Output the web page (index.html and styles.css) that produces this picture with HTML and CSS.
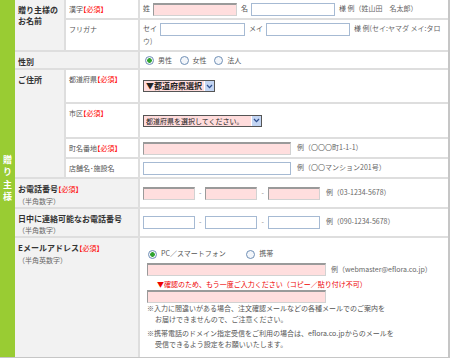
FILE: index.html
```html
<!DOCTYPE html>
<html lang="ja">
<head>
    <meta charset="UTF-8">
    <title>贈り主様情報</title>
    <link rel="stylesheet" href="styles.css">
</head>
<body>
    <table class="entry">
        <colgroup>
            <col class="col-side">
            <col class="col-label">
            <col class="col-sub">
            <col class="col-field">
        </colgroup>
        <tr class="h20">
            <th class="side" rowspan="10">贈<br>り<br>主<br>様</th>
            <th class="label" rowspan="2">贈り主様の<br>お名前</th>
            <td class="sub">漢字<span class="req">【必須】</span></td>
            <td class="field name">姓<input type="text" class="txt need w84">名<input type="text" class="txt w84">様 <span class="ex">例（姓山田　名太郎）</span></td>
        </tr>
        <tr class="h32">
            <td class="sub">フリガナ</td>
            <td class="field name top">セイ<input type="text" class="txt w85">メイ<input type="text" class="txt w84">様 <span class="ex">例(セイ:ヤマダ メイ:タロウ)</span></td>
        </tr>
        <tr class="h18">
            <th class="label" colspan="2">性別</th>
            <td class="field">
                <label class="opt"><input type="radio" name="sex" checked>男性</label>
                <label class="opt"><input type="radio" name="sex">女性</label>
                <label class="opt"><input type="radio" name="sex">法人</label>
            </td>
        </tr>
        <tr class="h34">
            <th class="label" rowspan="4">ご住所</th>
            <td class="sub">都道府県<span class="req">【必須】</span></td>
            <td class="field">
                <span class="pick pick-pref"><select><option>▼都道府県選択</option></select><span class="pick-btn"><svg width="7" height="5" viewBox="0 0 7 5"><path d="M1 1 L3.5 3.6 L6 1" fill="none" stroke="#2f4f8f" stroke-width="1.3"/></svg></span></span>
            </td>
        </tr>
        <tr class="h35">
            <td class="sub">市区<span class="req">【必須】</span></td>
            <td class="field">
                <span class="pick pick-city"><select><option>都道府県を選択してください。</option></select><span class="pick-btn"><svg width="7" height="5" viewBox="0 0 7 5"><path d="M1 1 L3.5 3.6 L6 1" fill="none" stroke="#2f4f8f" stroke-width="1.3"/></svg></span></span>
            </td>
        </tr>
        <tr class="h20">
            <td class="sub">町名番地<span class="req">【必須】</span></td>
            <td class="field"><input type="text" class="txt need w148"><span class="ex">例（〇〇〇町1-1-1）</span></td>
        </tr>
        <tr class="h20">
            <td class="sub">店舗名･施設名</td>
            <td class="field"><input type="text" class="txt w148"><span class="ex">例（〇〇マンション201号）</span></td>
        </tr>
        <tr class="h30">
            <th class="label" colspan="2">お電話番号<span class="req">【必須】</span><br><span class="hint">（半角数字）</span></th>
            <td class="field"><input type="text" class="txt need w52"><span class="dash">-</span><input type="text" class="txt need w52"><span class="dash">-</span><input type="text" class="txt need w52"><span class="ex">例（03-1234-5678）</span></td>
        </tr>
        <tr class="h28">
            <th class="label" colspan="2">日中に連絡可能なお電話番号<br><span class="hint">（半角数字）</span></th>
            <td class="field"><input type="text" class="txt w52"><span class="dash">-</span><input type="text" class="txt w52"><span class="dash">-</span><input type="text" class="txt w52"><span class="ex">例（090-1234-5678）</span></td>
        </tr>
        <tr class="h119 last">
            <th class="label" colspan="2">Eメールアドレス<span class="req">【必須】</span><br><span class="hint">（半角英数字）</span></th>
            <td class="field mail">
                <div class="radios">
                    <label class="opt"><input type="radio" name="mailtype" checked>PC／スマートフォン</label>
                    <label class="opt wide"><input type="radio" name="mailtype">携帯</label>
                </div>
                <div class="mail-line"><input type="text" class="txt need w179"><span class="ex">例（webmaster@eflora.co.jp）</span></div>
                <p class="confirm">▼確認のため、もう一度ご入力ください（コピー／貼り付け不可）</p>
                <div class="mail-line again"><input type="text" class="txt need w179"></div>
                <p class="note">※入力に間違いがある場合、注文確認メールなどの各種メールでのご案内を<br>お届けできませんので、ご注意ください。</p>
                <p class="note">※携帯電話のドメイン指定受信をご利用の場合は、eflora.co.jpからのメールを<br>受信できるよう設定をお願いいたします。</p>
            </td>
        </tr>
    </table>
</body>
</html>
```

FILE: styles.css
```css
body {
    margin: 0;
    font-family: "Noto Sans CJK JP", "Noto Sans", sans-serif;
    font-size: 7px;
    color: #555;
    background: #fff;
}
p {
    margin: 0;
}

.entry {
    width: 450px;
    table-layout: fixed;
    border-collapse: separate;
    border-spacing: 0;
    border-right: 2px solid #c6c6c6;
    border-bottom: 2px solid #c6c6c6;
}
.col-side { width: 15px; }
.col-label { width: 51px; }
.col-sub { width: 74px; }
.col-field { width: 308px; }

.h18 { height: 18px; }
.h20 { height: 20px; }
.h28 { height: 28px; }
.h30 { height: 30px; }
.h32 { height: 32px; }
.h34 { height: 34px; }
.h35 { height: 35px; }
.h119 { height: 119px; }

th, td {
    padding: 4px 3px 0;
    text-align: left;
    vertical-align: top;
    font-weight: normal;
    line-height: 11px;
    border-bottom: 2px solid #dedede;
}
.last td, .last th {
    border-bottom: 0;
}

.side {
    background: #99cc33;
    color: #fff;
    font-size: 9px;
    font-weight: bold;
    line-height: 12.5px;
    text-align: center;
    vertical-align: middle;
    padding: 0;
    border-bottom: 0;
}
.label {
    background: #f2f2f2;
    color: #333;
    font-size: 8px;
    font-weight: bold;
    border-right: 2px solid #dedede;
}
.sub {
    border-right: 2px solid #dedede;
}
.field {
    vertical-align: middle;
    padding: 0 3px;
}
.field.top {
    vertical-align: top;
    padding-top: 3px;
}

.req {
    color: #ff0000;
    font-weight: normal;
    font-feature-settings: "halt";
}
.label .req {
    font-size: 7px;
}
.hint {
    font-weight: normal;
    font-size: 7px;
    color: #666;
}
.ex {
    color: #666;
    margin-left: 6px;
}
.name .ex {
    margin-left: 0;
}

/* テキストボックス */
.txt {
    box-sizing: border-box;
    height: 13px;
    margin: 0;
    padding: 0 2px;
    border: 1px solid #a6bad3;
    background: #fff;
    vertical-align: middle;
    font-size: 7px;
}
.txt.need {
    background: #ffdede;
    border-color: #9a9a9a #d2d2d2 #d2d2d2 #9a9a9a;
    border-top-width: 2px;
}
.name .txt {
    margin: 0 4px 0 3px;
}
.w52 { width: 52px; }
.w84 { width: 84px; }
.w85 { width: 85px; }
.w148 { width: 148px; }
.w179 { width: 179px; }

.dash {
    margin: 0 4px;
    color: #888;
}

/* ラジオボタン */
.opt {
    margin-right: 4px;
    white-space: nowrap;
}
.opt input {
    appearance: none;
    width: 9px;
    height: 9px;
    margin: 0 4px 0 2px;
    border: 1px solid #6f8fb6;
    border-radius: 50%;
    background: #f3f6fa;
    vertical-align: middle;
}
.opt input:checked {
    background: radial-gradient(circle, #2fa32f 0 2px, #f3f6fa 2.6px);
}

/* プルダウン */
.pick {
    display: inline-flex;
    box-sizing: border-box;
    height: 12px;
    border: 1px solid #555;
    background: #ffdcdc;
    vertical-align: middle;
}
.pick select {
    appearance: none;
    flex: 1;
    min-width: 0;
    height: 10px;
    margin: 0;
    padding: 0 0 0 2px;
    border: 0;
    background: transparent;
    font-family: inherit;
    font-size: 7px;
    line-height: 10px;
    color: #222;
}
.pick-pref {
    width: 72px;
}
.pick-pref select {
    font-size: 8px;
    font-weight: bold;
}
.pick-city {
    width: 119px;
}
.pick-btn {
    width: 9px;
    display: flex;
    align-items: center;
    justify-content: center;
    background: #c3d5f3;
    border-left: 1px solid #fff;
}

/* Eメール */
.mail {
    vertical-align: top;
    padding: 9px 7px 0;
}
.radios {
    height: 12px;
    line-height: 12px;
}
.radios .opt input {
    margin-left: 1px;
}
.radios .wide {
    margin-left: 14px;
}
.mail-line {
    display: flex;
    align-items: center;
    height: 13px;
    margin-top: 4px;
}
.mail-line.again {
    margin-top: 0;
}
.mail-line .ex {
    margin-left: 5px;
}
.confirm {
    color: #ee0000;
    padding-left: 10px;
    margin-top: 2px;
    line-height: 12px;
}
.note {
    line-height: 11px;
    padding-left: 8px;
    text-indent: -8px;
}
.note + .note {
    margin-top: 3px;
}
```
